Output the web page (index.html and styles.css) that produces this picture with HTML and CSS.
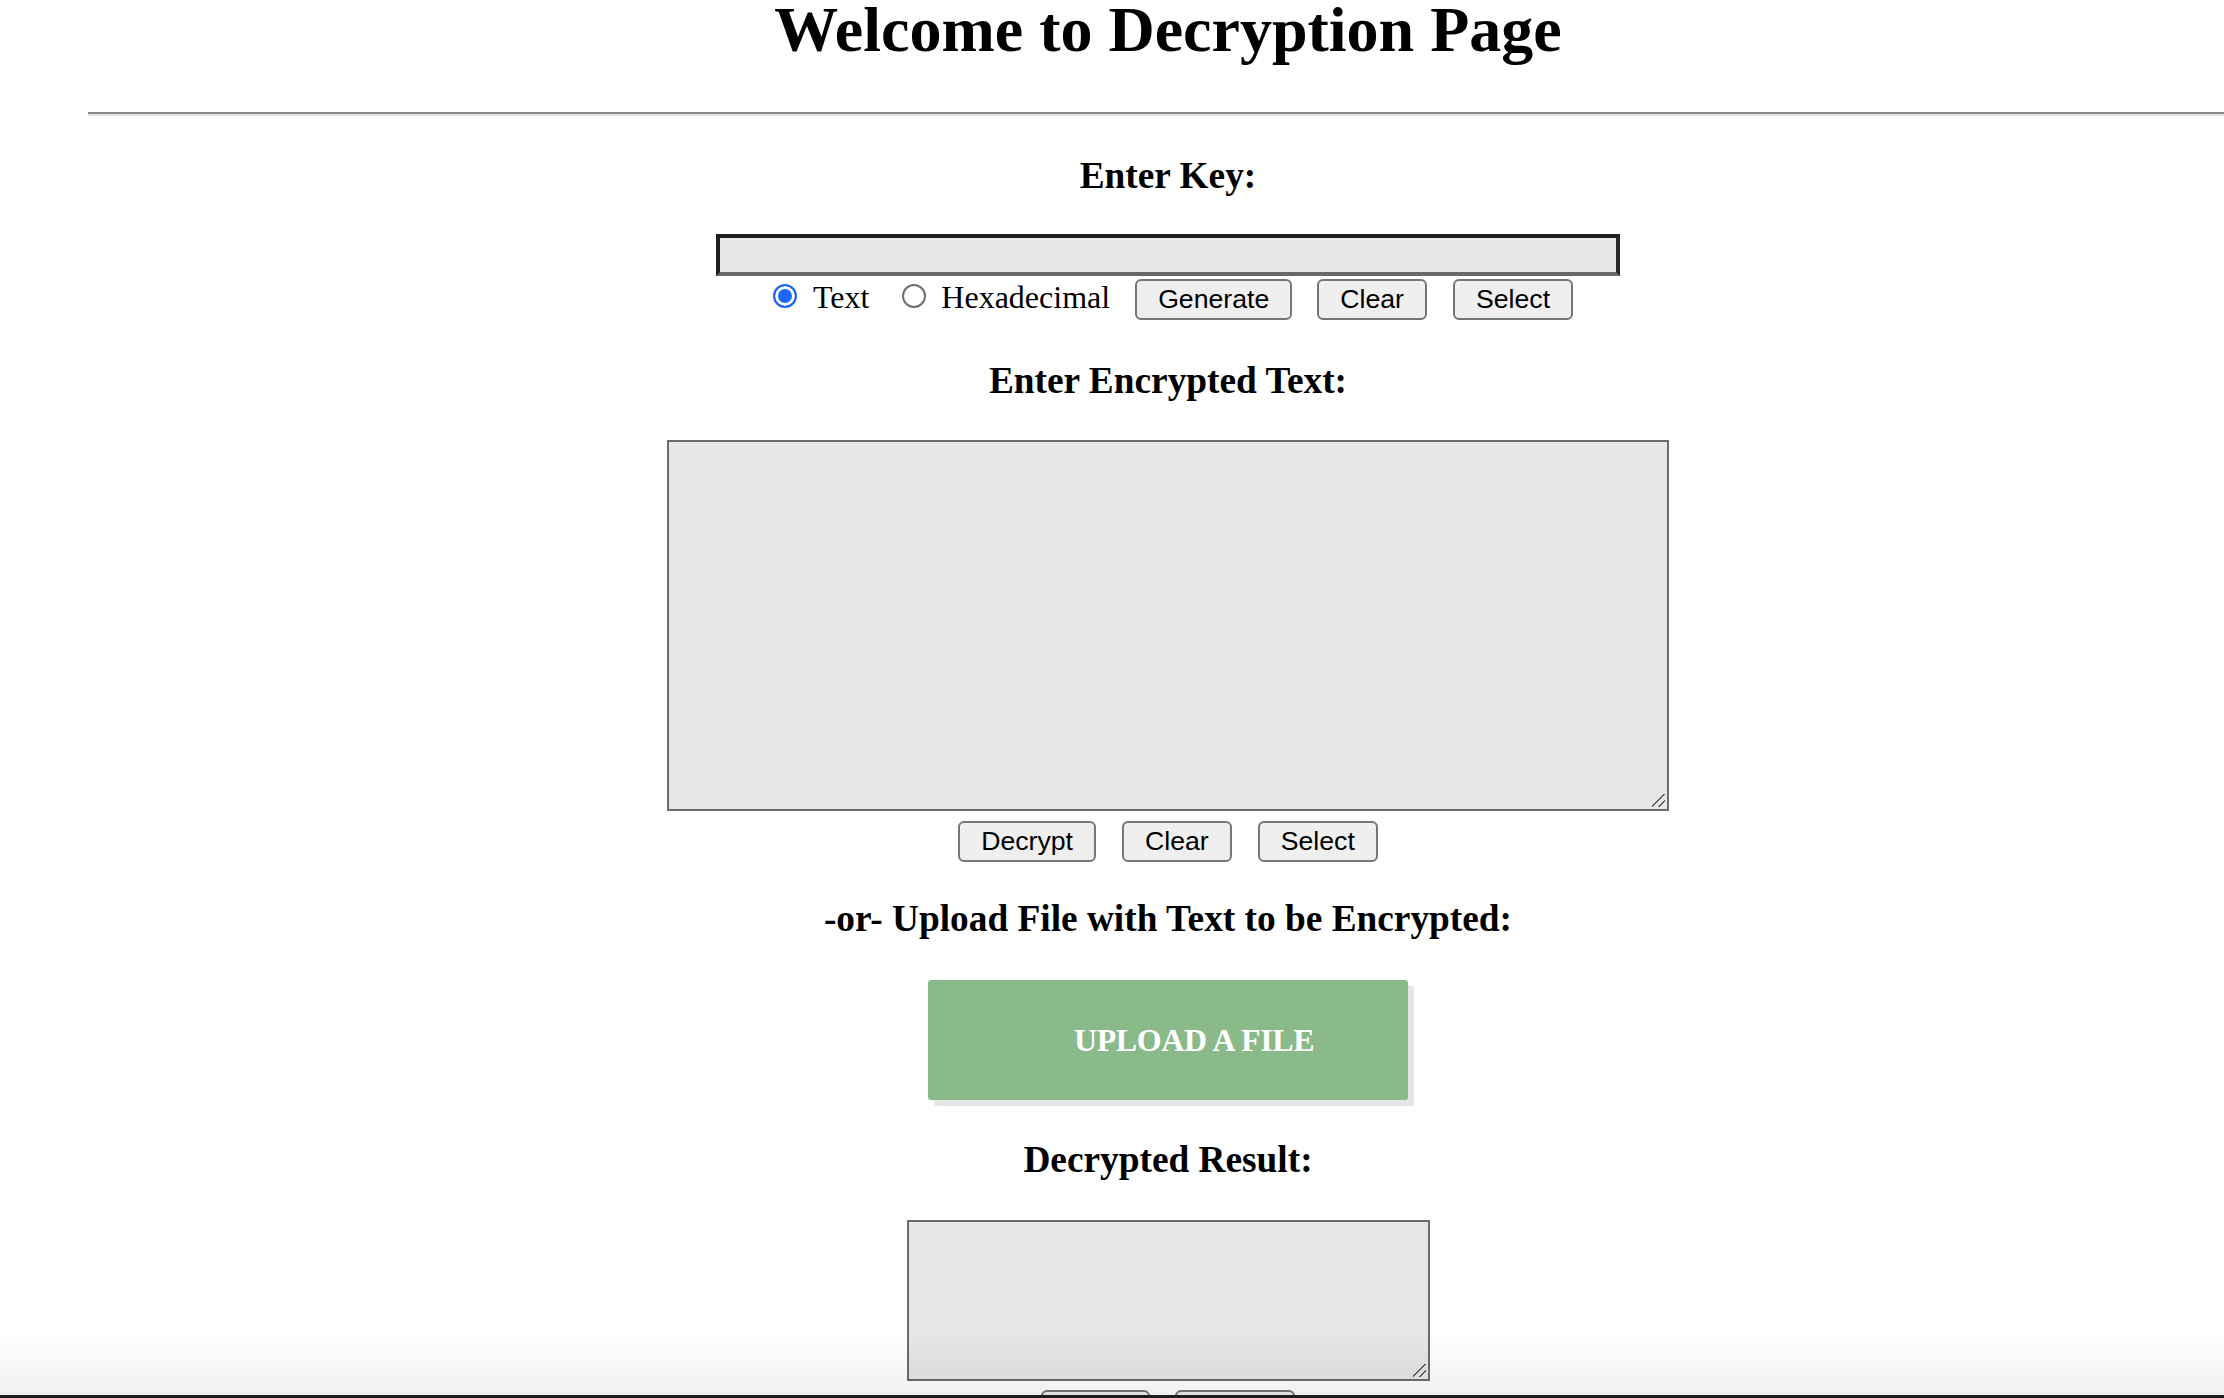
FILE: index.html
```html
<!DOCTYPE html>
<html lang="en">
<head>
<meta charset="utf-8">
<title>Decryption Page</title>
<link rel="stylesheet" href="styles.css">
</head>
<body>
<main class="page">
  <h1 class="title">Welcome to Decryption Page</h1>
  <hr class="rule">

  <h3 class="label label-key">Enter Key:</h3>
  <input class="key-input" type="text" aria-label="Key">
  <div class="key-row">
    <input class="radio radio-text" type="radio" name="fmt" checked aria-label="Text">
    <span class="opt opt-text">Text</span>
    <input class="radio radio-hex" type="radio" name="fmt" aria-label="Hexadecimal">
    <span class="opt opt-hex">Hexadecimal</span>
    <button class="btn btn-gen" type="button">Generate</button>
    <button class="btn btn-clear" type="button">Clear</button>
    <button class="btn btn-select" type="button">Select</button>
  </div>

  <h3 class="label label-enc">Enter Encrypted Text:</h3>
  <textarea class="area area-main" aria-label="Encrypted text"></textarea>
  <div class="btn-row btn-row-main">
    <button class="btn" type="button">Decrypt</button>
    <button class="btn" type="button">Clear</button>
    <button class="btn" type="button">Select</button>
  </div>

  <h3 class="label label-upload">-or- Upload File with Text to be Encrypted:</h3>
  <label class="upload"><input class="file" type="file"><span class="upload-text">UPLOAD A FILE</span></label>

  <h3 class="label label-result">Decrypted Result:</h3>
  <textarea class="area area-result" aria-label="Decrypted result"></textarea>
  <div class="btn-row btn-row-result">
    <button class="btn" type="button">Clear</button>
    <button class="btn" type="button">Select</button>
  </div>
</main>
<div class="window-edge"></div>
</body>
</html>
```

FILE: styles.css
```css
html, body {
  margin: 0;
  padding: 0;
  background: #ffffff;
  color: #000000;
  font-family: "Liberation Serif", "Times New Roman", serif;
  font-size: 32px;
}

.page {
  padding-left: 112px;
  display: flex;
  flex-direction: column;
  align-items: center;
}

.title {
  margin: 0;
  font-size: 64px;
  line-height: 60px;
  font-weight: bold;
  text-align: center;
}

.rule {
  align-self: stretch;
  margin: 52px 0 0 -24px;
  height: 0;
  border: none;
  border-top: 2px solid #8a8a8a;
  border-bottom: 2px solid #e4e4e4;
}

.label {
  margin: 0;
  font-size: 37.33px;
  line-height: 44px;
  font-weight: bold;
  text-align: center;
}

.label-key { margin-top: 38px; }
.label-enc { margin-top: 39px; }
.label-upload { margin-top: 35px; }
.label-result { margin-top: 38px; }

.key-input {
  box-sizing: border-box;
  width: 904px;
  height: 42px;
  margin: 36px 0 0 0;
  padding: 0 6px;
  background: #e6e6e6;
  border-style: solid;
  border-width: 4px;
  border-color: #1f1f1f #2a2a2a #686868 #1f1f1f;
  font-size: 26px;
  outline: none;
}

.key-row {
  margin-top: 3px;
  display: flex;
  align-items: baseline;
  justify-content: center;
}

.radio {
  -webkit-appearance: none;
  appearance: none;
  box-sizing: border-box;
  width: 24px;
  height: 24px;
  margin: 0;
  border-radius: 50%;
  border: 2px solid #6f6f6f;
  background: #ffffff;
}

.radio:checked {
  border: 2.5px solid #1a66ff;
  background: #1a66ff;
  box-shadow: inset 0 0 0 3px #ffffff;
}

.radio-text { margin-left: 10px; margin-right: 16px; }
.radio-hex { margin-right: 15px; }

.opt {
  font-size: 32px;
  line-height: 36px;
}

.opt-text { margin-right: 33px; }
.opt-hex { margin-right: 25px; }

.btn {
  box-sizing: border-box;
  height: 41px;
  padding: 0 21px;
  background: #efefef;
  border: 2px solid #767676;
  border-radius: 6px;
  font-family: "Liberation Sans", Arial, sans-serif;
  font-size: 26.67px;
  color: #000000;
}

.btn-clear { margin-left: 25px; }
.btn-select { margin-left: 26px; }

.area {
  display: block;
  box-sizing: border-box;
  margin: 0;
  background: #e6e6e6;
  border: 2px solid #6c6c6c;
  font-family: "Liberation Mono", monospace;
  font-size: 26px;
}

.area::-webkit-resizer {
  background:
    linear-gradient(135deg, transparent 0 48%, #5a5a5a 48% 56%, transparent 56% 100%) right 2px bottom 2px / 14px 14px no-repeat,
    linear-gradient(135deg, transparent 0 48%, #5a5a5a 48% 60%, transparent 60% 100%) right 2px bottom 2px / 7px 7px no-repeat;
}

.area-main {
  width: 1002px;
  height: 371px;
  margin-top: 37px;
}

.area-result {
  width: 523px;
  height: 161px;
  margin-top: 38px;
}

.btn-row {
  display: flex;
  justify-content: center;
  gap: 26px;
}

.btn-row-main { margin-top: 10px; }
.btn-row-result { margin-top: 9px; gap: 25px; }

.upload {
  box-sizing: border-box;
  width: 480px;
  height: 120px;
  margin-top: 39px;
  padding-left: 146px;
  display: flex;
  align-items: center;
  background: #8ab98a;
  border-radius: 3px;
  box-shadow: 6px 6px 0 #e6e6e6;
  cursor: pointer;
}

.file {
  display: none;
}

.upload-text {
  color: #ffffff;
  font-size: 32px;
  font-weight: bold;
  line-height: 1;
  letter-spacing: -0.4px;
}

.window-edge {
  position: fixed;
  left: 0;
  right: 0;
  bottom: 0;
  height: 62px;
  background: linear-gradient(to bottom, rgba(0, 0, 0, 0), rgba(0, 0, 0, 0.06));
  border-bottom: 3px solid #1c1c1c;
  pointer-events: none;
}
```
